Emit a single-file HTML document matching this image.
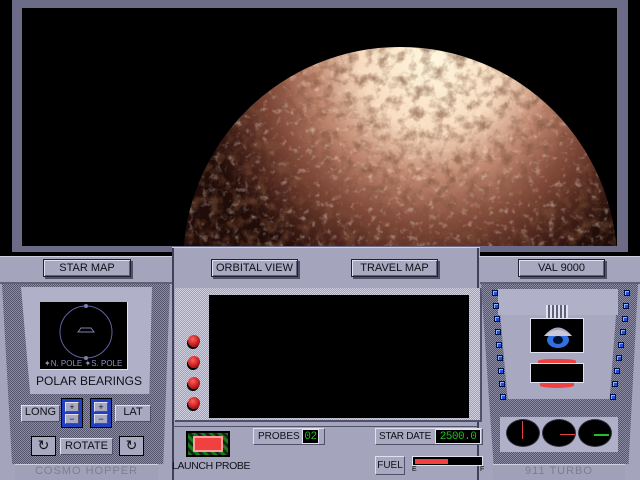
<!DOCTYPE html>
<html><head><meta charset="utf-8"><style>
*{margin:0;padding:0;box-sizing:border-box}
body{width:640px;height:480px;background:#000;position:relative;overflow:hidden;font-family:"Liberation Sans",sans-serif;white-space:nowrap}
.a{position:absolute}
.pan{background:#a4a4bc}
.dith{background:repeating-conic-gradient(#8c8ca4 0 25%,#54546c 0 50%) 0 0/2px 2px}
.ldith{background:repeating-conic-gradient(#d0d0e0 0 25%,#a0a0b8 0 50%) 0 0/2px 2px}
.btn{position:absolute;background:#a8a8c0;border:1px solid #202030;box-shadow:inset 1px 1px 0 #e0e0f0,inset -1px -1px 0 #606078,2px 2px 0 #505068;font-size:11px;color:#101018;text-align:center;line-height:16px}
.plate{position:absolute;background:#a8a8c0;border:1px solid #e0e0f0;border-right-color:#505068;border-bottom-color:#505068;font-size:11px;color:#101018;text-align:center}
.dig{position:absolute;background:#000;color:#20c020;font-family:"Liberation Mono",monospace;font-size:11px;line-height:14px;border:1px solid #e0e0f0;text-align:center;letter-spacing:-0.5px}
.knob{position:absolute;width:12px;height:12px;border-radius:50%;background:radial-gradient(circle at 40% 35%,#ff6060,#c01818 60%,#300);box-shadow:-1px 2px 0 #000}
.bd{position:absolute;width:6px;height:6px;background:#2050e0;border:1px solid #001040;box-shadow:inset 1px 1px 0 #90b0ff}
.lbl{position:absolute;font-size:11px;color:#101018;text-align:center}
.g{position:absolute;width:34px;height:28px;border-radius:50%;background:#000;border:1px solid #303040}
</style></head><body>
<div class="a" style="left:12px;top:0;width:616px;height:252px;background:#6c6c88"></div>
<div class="a" style="left:22px;top:8px;width:595px;height:238px;background:#000;overflow:hidden">
<svg width="595" height="238" style="position:absolute;left:0;top:0">
<defs>
<radialGradient id="pg" gradientUnits="userSpaceOnUse" cx="410" cy="50" r="240">
<stop offset="0" stop-color="#fff8e0"/><stop offset="0.3" stop-color="#f8dcc0"/><stop offset="0.5" stop-color="#c08870"/><stop offset="0.7" stop-color="#804838"/><stop offset="0.88" stop-color="#442018"/><stop offset="1" stop-color="#200c08"/>
</radialGradient>
<filter id="tx"><feTurbulence type="fractalNoise" baseFrequency="0.09" numOctaves="4" seed="7"/><feColorMatrix values="0 0 0 0 0.2  0 0 0 0 0.08  0 0 0 0 0.04  0 0 0 -2.6 1.5"/><feComposite in2="SourceGraphic" operator="in"/></filter>
<filter id="tx2"><feTurbulence type="fractalNoise" baseFrequency="0.15" numOctaves="3" seed="2"/><feColorMatrix values="0 0 0 0 1  0 0 0 0 0.9  0 0 0 0 0.8  0 0 0 3 -1.7"/><feComposite in2="SourceGraphic" operator="in"/></filter>
<clipPath id="cp"><circle cx="378" cy="256" r="217"/></clipPath>
</defs>
<circle cx="378" cy="256" r="217" fill="url(#pg)"/>
<rect x="150" y="30" width="460" height="220" clip-path="url(#cp)" filter="url(#tx)" fill="#000" opacity="0.6"/>
<rect x="150" y="30" width="460" height="220" clip-path="url(#cp)" filter="url(#tx2)" fill="#000" opacity="0.4"/>
</svg></div>
<div class="a pan" style="left:0;top:256px;width:174px;height:224px"></div>
<div class="a pan" style="left:478px;top:256px;width:162px;height:224px"></div>
<div class="a pan" style="left:172px;top:247px;width:308px;height:233px"></div>
<div class="a" style="left:0;top:256px;width:174px;height:1px;background:#d0d0e0"></div>
<div class="a" style="left:478px;top:256px;width:162px;height:1px;background:#d0d0e0"></div>
<div class="a" style="left:172px;top:247px;width:308px;height:1px;background:#d0d0e0"></div>
<div class="a" style="left:0;top:282px;width:172px;height:2px;background:#606078"></div>
<div class="a" style="left:480px;top:282px;width:160px;height:2px;background:#606078"></div>
<div class="a" style="left:172px;top:248px;width:2px;height:232px;background:#404058"></div>
<div class="a" style="left:477px;top:248px;width:2px;height:232px;background:#404058"></div>
<div class="a dith" style="left:2px;top:284px;width:168px;height:180px;clip-path:polygon(0 0,100% 0,96% 100%,6% 100%)"></div>
<div class="a pan" style="left:21px;top:287px;width:131px;height:107px;clip-path:polygon(0 0,100% 0,98% 100%,7% 100%);background:#b0b0c8"></div>
<div class="a" style="left:40px;top:302px;width:88px;height:68px;background:#000;border-right:1px solid #e0e0f0;border-bottom:1px solid #e0e0f0">
<svg width="88" height="68"><circle cx="46" cy="30" r="26" fill="none" stroke="#6060a0"/><path d="M38 30 l3 -4 h10 l3 4z" fill="none" stroke="#8080b0"/><circle cx="46" cy="4" r="2" fill="#8080b0"/><circle cx="46" cy="56" r="2" fill="#8080b0"/></svg>
<div class="a" style="left:4px;top:57px;font-size:8px;color:#9090c0">✦N. POLE ✦S. POLE</div></div>
<div class="lbl" style="left:30px;top:374px;width:118px;font-size:12px">POLAR BEARINGS</div>
<div class="plate" style="left:21px;top:405px;width:39px;height:17px">LONG</div>
<div class="plate" style="left:115px;top:405px;width:36px;height:17px">LAT</div>
<div class="a" style="left:61px;top:398px;width:22px;height:30px;background:#2040c0;border:1px solid #000"><div class="plate" style="left:3px;top:3px;width:14px;height:10px;font-size:9px;line-height:8px">+</div><div class="plate" style="left:3px;top:15px;width:14px;height:10px;font-size:9px;line-height:8px">−</div></div>
<div class="a" style="left:90px;top:398px;width:22px;height:30px;background:#2040c0;border:1px solid #000"><div class="plate" style="left:3px;top:3px;width:14px;height:10px;font-size:9px;line-height:8px">+</div><div class="plate" style="left:3px;top:15px;width:14px;height:10px;font-size:9px;line-height:8px">−</div></div>
<div class="plate" style="left:31px;top:436px;width:25px;height:20px;font-size:14px;line-height:17px;border:1px solid #000">↻</div>
<div class="plate" style="left:60px;top:438px;width:53px;height:17px;line-height:15px">ROTATE</div>
<div class="plate" style="left:119px;top:436px;width:25px;height:20px;font-size:14px;line-height:17px;border:1px solid #000">↻</div>
<div class="a" style="left:15px;top:464px;width:143px;height:16px;background:#a0a0b8;border-top:1px solid #d0d0e0;font-size:11px;color:#7c7c94;text-align:center;letter-spacing:1px">COSMO HOPPER</div>
<div class="btn" style="left:43px;top:259px;width:88px;height:18px">STAR MAP</div>
<div class="btn" style="left:211px;top:259px;width:87px;height:18px">ORBITAL VIEW</div>
<div class="btn" style="left:351px;top:259px;width:87px;height:18px">TRAVEL MAP</div>
<div class="a ldith" style="left:175px;top:288px;width:307px;height:134px;border-right:2px solid #505068;border-bottom:2px solid #505068"></div>
<div class="a" style="left:209px;top:295px;width:260px;height:123px;background:#000"></div>
<div class="knob" style="left:188px;top:335px"></div>
<div class="knob" style="left:188px;top:356px"></div>
<div class="knob" style="left:188px;top:377px"></div>
<div class="knob" style="left:188px;top:397px"></div>
<div class="a" style="left:172px;top:426px;width:306px;height:1px;background:#505068"></div>
<div class="a" style="left:186px;top:431px;width:44px;height:26px;background:repeating-linear-gradient(45deg,#108010 0 3px,#202020 3px 6px);border:2px solid #000"><div class="a" style="left:5px;top:3px;width:30px;height:16px;background:#f04040;border:2px solid #ffa0a0"></div></div>
<div class="lbl" style="left:172px;top:460px;width:78px;font-size:10.5px;letter-spacing:-0.4px">LAUNCH PROBE</div>
<div class="plate" style="left:253px;top:428px;width:72px;height:17px;text-align:left;padding-left:4px;line-height:15px;font-size:10px">PROBES</div>
<div class="dig" style="left:302px;top:429px;width:17px;height:15px">02</div>
<div class="plate" style="left:375px;top:428px;width:108px;height:17px;text-align:left;padding-left:3px;line-height:15px;font-size:10px;letter-spacing:-0.3px">STAR DATE</div>
<div class="dig" style="left:435px;top:429px;width:46px;height:15px">2500.0</div>
<div class="plate" style="left:375px;top:456px;width:30px;height:19px;line-height:17px;font-size:10px">FUEL</div>
<div class="a" style="left:412px;top:456px;width:71px;height:10px;background:#000;border:1px solid #e0e0f0"><div class="a" style="left:2px;top:2px;width:33px;height:5px;background:#f04040"></div></div>
<div class="a" style="left:412px;top:466px;font-size:7px;color:#000">E</div>
<div class="a" style="left:480px;top:466px;font-size:7px;color:#000">F</div>
<div class="btn" style="left:518px;top:259px;width:87px;height:18px">VAL 9000</div>
<div class="a dith" style="left:481px;top:284px;width:157px;height:180px;clip-path:polygon(0 0,100% 0,94% 100%,8% 100%)"></div>
<div class="a" style="left:498px;top:289px;width:120px;height:110px;background:#a8a8c0;clip-path:polygon(0 0,100% 0,93% 100%,8% 100%)"></div>
<div class="a" style="left:498px;top:289px;width:120px;height:26px;background:#b0b0c8"></div>
<div class="a" style="left:546px;top:305px;width:22px;height:14px;background:repeating-linear-gradient(90deg,#e0e0f0 0 2px,#606078 2px 4px)"></div>
<div class="a" style="left:530px;top:318px;width:54px;height:35px;background:#000;border:1px solid #e0e0f0"><svg width="54" height="35"><path d="M13 17 Q27 0 41 17z" fill="#a8a8c0"/><ellipse cx="27" cy="21" rx="11" ry="8" fill="#3070e0"/><ellipse cx="27" cy="21" rx="5" ry="4" fill="#001030"/><path d="M13 17 Q27 5 41 17" fill="#c8c8d8"/></svg></div>
<div class="a" style="left:538px;top:359px;width:38px;height:5px;background:#f04040;border-radius:40% 40% 0 0"></div>
<div class="a" style="left:530px;top:363px;width:54px;height:20px;background:#000;border:1px solid #e0e0f0"></div>
<div class="a" style="left:540px;top:383px;width:34px;height:5px;background:#f04040;border-radius:0 0 50% 50%"></div>
<div class="a" style="left:500px;top:417px;width:118px;height:35px;background:#b0b0c8"></div>
<div class="g" style="left:506px;top:419px"><div class="a" style="left:15px;top:1px;width:1px;height:18px;background:#e04040"></div></div>
<div class="g" style="left:542px;top:419px"><div class="a" style="left:17px;top:14px;width:15px;height:1px;background:#e04040"></div></div>
<div class="g" style="left:578px;top:419px"><div class="a" style="left:15px;top:14px;width:15px;height:2px;background:#20c020"></div></div>
<div class="a" style="left:493px;top:464px;width:132px;height:16px;background:#a0a0b8;border-top:1px solid #d0d0e0;font-size:11px;color:#7c7c94;text-align:center;letter-spacing:1px">911 TURBO</div>
<div class="bd" style="left:492px;top:290px"></div><div class="bd" style="left:493px;top:303px"></div><div class="bd" style="left:494px;top:316px"></div><div class="bd" style="left:495px;top:329px"></div><div class="bd" style="left:496px;top:342px"></div><div class="bd" style="left:497px;top:355px"></div><div class="bd" style="left:498px;top:368px"></div><div class="bd" style="left:499px;top:381px"></div><div class="bd" style="left:500px;top:394px"></div>
<div class="bd" style="left:624px;top:290px"></div><div class="bd" style="left:623px;top:303px"></div><div class="bd" style="left:622px;top:316px"></div><div class="bd" style="left:620px;top:329px"></div><div class="bd" style="left:618px;top:342px"></div><div class="bd" style="left:616px;top:355px"></div><div class="bd" style="left:614px;top:368px"></div><div class="bd" style="left:612px;top:381px"></div><div class="bd" style="left:610px;top:394px"></div>
</body></html>
